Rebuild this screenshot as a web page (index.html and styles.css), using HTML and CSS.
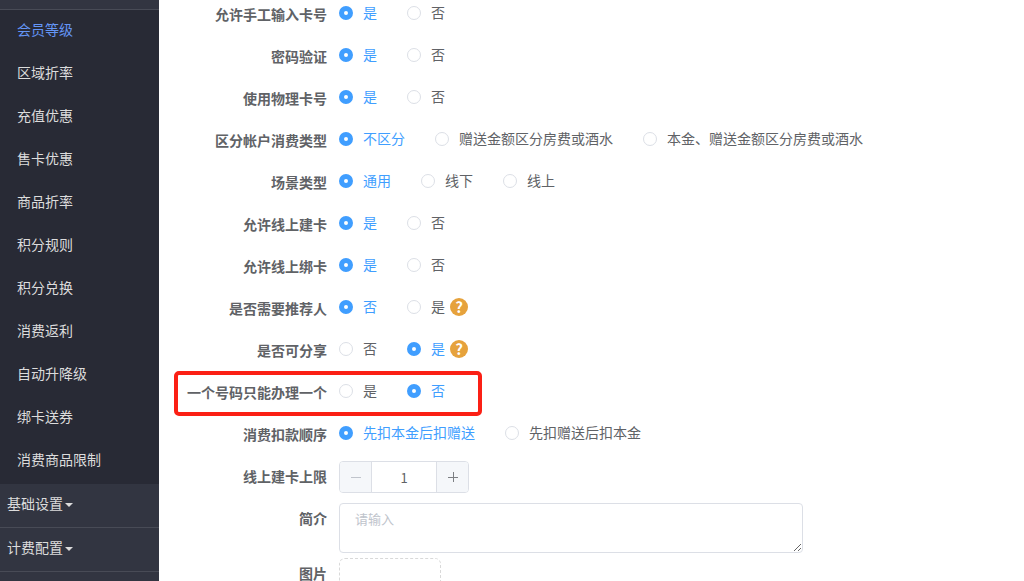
FILE: index.html
```html
<!DOCTYPE html>
<html lang="zh-CN">
<head>
    <meta charset="UTF-8">
    <meta name="viewport" content="width=device-width, initial-scale=1.0">
    <title>会员等级</title>
    <link rel="stylesheet" href="styles.css">
</head>
<body>
    <div class="layout">
        <nav class="sidebar">
            <div class="sidebar-top"></div>
            <ul class="submenu">
                <li><a href="#" class="active">会员等级</a></li>
                <li><a href="#">区域折率</a></li>
                <li><a href="#">充值优惠</a></li>
                <li><a href="#">售卡优惠</a></li>
                <li><a href="#">商品折率</a></li>
                <li><a href="#">积分规则</a></li>
                <li><a href="#">积分兑换</a></li>
                <li><a href="#">消费返利</a></li>
                <li><a href="#">自动升降级</a></li>
                <li><a href="#">绑卡送券</a></li>
                <li><a href="#">消费商品限制</a></li>
            </ul>
            <a href="#" class="menu-group">基础设置<span class="caret"></span></a>
            <a href="#" class="menu-group">计费配置<span class="caret"></span></a>
        </nav>

        <form class="form">
            <div class="radio-rows">
                <div class="form-item" role="radiogroup" aria-labelledby="l-manual">
                    <span class="form-label" id="l-manual">允许手工输入卡号</span>
                    <div class="options">
                        <label class="radio"><input type="radio" name="manual" checked><span>是</span></label>
                        <label class="radio"><input type="radio" name="manual"><span>否</span></label>
                    </div>
                </div>
                <div class="form-item" role="radiogroup" aria-labelledby="l-password">
                    <span class="form-label" id="l-password">密码验证</span>
                    <div class="options">
                        <label class="radio"><input type="radio" name="password" checked><span>是</span></label>
                        <label class="radio"><input type="radio" name="password"><span>否</span></label>
                    </div>
                </div>
                <div class="form-item" role="radiogroup" aria-labelledby="l-physical">
                    <span class="form-label" id="l-physical">使用物理卡号</span>
                    <div class="options">
                        <label class="radio"><input type="radio" name="physical" checked><span>是</span></label>
                        <label class="radio"><input type="radio" name="physical"><span>否</span></label>
                    </div>
                </div>
                <div class="form-item" role="radiogroup" aria-labelledby="l-account">
                    <span class="form-label" id="l-account">区分帐户消费类型</span>
                    <div class="options">
                        <label class="radio"><input type="radio" name="account" checked><span>不区分</span></label>
                        <label class="radio"><input type="radio" name="account"><span>赠送金额区分房费或酒水</span></label>
                        <label class="radio"><input type="radio" name="account"><span>本金、赠送金额区分房费或酒水</span></label>
                    </div>
                </div>
                <div class="form-item" role="radiogroup" aria-labelledby="l-scene">
                    <span class="form-label" id="l-scene">场景类型</span>
                    <div class="options">
                        <label class="radio"><input type="radio" name="scene" checked><span>通用</span></label>
                        <label class="radio"><input type="radio" name="scene"><span>线下</span></label>
                        <label class="radio"><input type="radio" name="scene"><span>线上</span></label>
                    </div>
                </div>
                <div class="form-item" role="radiogroup" aria-labelledby="l-create">
                    <span class="form-label" id="l-create">允许线上建卡</span>
                    <div class="options">
                        <label class="radio"><input type="radio" name="create" checked><span>是</span></label>
                        <label class="radio"><input type="radio" name="create"><span>否</span></label>
                    </div>
                </div>
                <div class="form-item" role="radiogroup" aria-labelledby="l-bind">
                    <span class="form-label" id="l-bind">允许线上绑卡</span>
                    <div class="options">
                        <label class="radio"><input type="radio" name="bind" checked><span>是</span></label>
                        <label class="radio"><input type="radio" name="bind"><span>否</span></label>
                    </div>
                </div>
                <div class="form-item" role="radiogroup" aria-labelledby="l-referrer">
                    <span class="form-label" id="l-referrer">是否需要推荐人</span>
                    <div class="options">
                        <label class="radio"><input type="radio" name="referrer" checked><span>否</span></label>
                        <label class="radio"><input type="radio" name="referrer"><span>是</span></label>
                        <button type="button" class="help">?</button>
                    </div>
                </div>
                <div class="form-item" role="radiogroup" aria-labelledby="l-share">
                    <span class="form-label" id="l-share">是否可分享</span>
                    <div class="options">
                        <label class="radio"><input type="radio" name="share"><span>否</span></label>
                        <label class="radio"><input type="radio" name="share" checked><span>是</span></label>
                        <button type="button" class="help">?</button>
                    </div>
                </div>
                <div class="form-item marked" role="radiogroup" aria-labelledby="l-single">
                    <span class="form-label" id="l-single">一个号码只能办理一个</span>
                    <div class="options">
                        <label class="radio"><input type="radio" name="single"><span>是</span></label>
                        <label class="radio"><input type="radio" name="single" checked><span>否</span></label>
                    </div>
                </div>
                <div class="form-item" role="radiogroup" aria-labelledby="l-order">
                    <span class="form-label" id="l-order">消费扣款顺序</span>
                    <div class="options">
                        <label class="radio"><input type="radio" name="order" checked><span>先扣本金后扣赠送</span></label>
                        <label class="radio"><input type="radio" name="order"><span>先扣赠送后扣本金</span></label>
                    </div>
                </div>
            </div>

            <div class="field-rows">
                <div class="form-item">
                    <label class="form-label" for="limit">线上建卡上限</label>
                    <div class="input-number">
                        <button type="button" aria-label="减少" disabled>
                            <svg width="12" height="12" viewBox="0 0 12 12"><path d="M1 6.5h10" stroke="currentColor"/></svg>
                        </button>
                        <input type="text" id="limit" value="1">
                        <button type="button" aria-label="增加">
                            <svg width="12" height="12" viewBox="0 0 12 12"><path d="M1 6.5h10M6.5 1v10" stroke="currentColor"/></svg>
                        </button>
                    </div>
                </div>
                <div class="form-item">
                    <label class="form-label" for="intro">简介</label>
                    <textarea id="intro" class="textarea" placeholder="请输入"></textarea>
                </div>
                <div class="form-item upload-item">
                    <span class="form-label" id="l-picture">图片</span>
                    <button type="button" class="upload" aria-labelledby="l-picture"></button>
                </div>
            </div>
        </form>
    </div>
</body>
</html>
```

FILE: styles.css
```css
*,
*::after {
    margin: 0;
    padding: 0;
    box-sizing: border-box;
}

body {
    font-family: "Microsoft YaHei", "Noto Sans CJK SC", sans-serif;
    font-size: 14px;
    color: #606266;
    background-color: #fff;
    overflow: hidden;
}

button, input, textarea {
    font-family: inherit;
    color: inherit;
}

.layout {
    display: flex;
    height: 100vh;
}

/* Sidebar */
.sidebar {
    flex: none;
    width: 159px;
    overflow: hidden;
    background-color: #323541;
}

.sidebar a {
    display: block;
    color: #dcdcdc;
    text-decoration: none;
}

.sidebar-top {
    height: 10px;
    border-bottom: 1px solid #484b56;
}

.submenu {
    list-style: none;
    padding-bottom: 1px;
    background-color: #282a35;
}

.submenu a {
    padding: 0 17px 5px;
    line-height: 38px;
}

.submenu a.active {
    color: #6495f5;
}

.sidebar .menu-group {
    display: flex;
    align-items: center;
    padding: 0 7px 5px;
    line-height: 38px;
    border-bottom: 1px solid #484b56;
}

.caret {
    margin: 4px 0 0 2px;
    border-top: 4px solid #dcdcdc;
    border-left: 4px solid transparent;
    border-right: 4px solid transparent;
}

/* Form */
.form {
    flex: 1;
    min-width: 0;
}

.radio-rows {
    display: grid;
    gap: 12px;
    margin-bottom: 11px;
}

.form-item {
    display: flex;
    align-items: flex-start;
    min-height: 30px;
}

.form-label {
    flex: none;
    width: 180px;
    padding-right: 12px;
    line-height: 28px;
    font-weight: bold;
    text-align: right;
}

.options {
    display: flex;
    align-items: center;
    height: 26px;
}

.radio {
    display: flex;
    align-items: center;
    gap: 10px;
    line-height: 24px;
    white-space: nowrap;
    cursor: pointer;
}

.radio + .radio {
    margin-left: 30px;
}

.radio span {
    padding-bottom: 2px;
}

.radio input {
    appearance: none;
    width: 14px;
    height: 14px;
    border: 1px solid #dcdfe6;
    border-radius: 50%;
    background-color: #fff;
}

.radio input:checked {
    border: 5px solid #409eff;
}

.radio input:checked + span {
    color: #409eff;
}

.help {
    width: 18px;
    height: 18px;
    margin-left: 5px;
    border: none;
    border-radius: 50%;
    background-color: #e6a23c;
    color: #fff;
    font-size: 15px;
    font-weight: bold;
    line-height: 18px;
    text-align: center;
}

.marked {
    position: relative;
}

.marked::after {
    content: "";
    position: absolute;
    top: -7px;
    left: 15px;
    width: 308px;
    height: 45px;
    border: 4px solid #fb2015;
    border-radius: 5px;
    pointer-events: none;
}

.field-rows .form-label {
    line-height: 30px;
}

.field-rows .form-item {
    margin-bottom: 10px;
}

.input-number {
    display: flex;
    width: 130px;
    height: 32px;
    border: 1px solid #dcdfe6;
    border-radius: 4px;
    overflow: hidden;
}

.input-number button {
    display: flex;
    align-items: center;
    justify-content: center;
    flex: none;
    width: 31px;
    border: none;
    background-color: #f5f7fa;
    color: #7d7f83;
}

.input-number button:disabled {
    color: #c0c4cc;
}

.input-number input {
    flex: 1;
    min-width: 0;
    border: solid #dcdfe6;
    border-width: 0 1px;
    font-size: 13px;
    text-align: center;
}

.textarea {
    flex: 1;
    max-width: 464px;
    height: 50px;
    padding: 5px 15px;
    border: 1px solid #dcdfe6;
    border-radius: 4px;
    font-size: 13px;
    line-height: 20px;
    resize: vertical;
}

.textarea::placeholder {
    color: #c0c4cc;
}

.field-rows .upload-item {
    margin-top: -5px;
}

.upload {
    width: 102px;
    height: 102px;
    border: 1px dashed #d9d9d9;
    border-radius: 6px;
    background-color: #fff;
}
```
